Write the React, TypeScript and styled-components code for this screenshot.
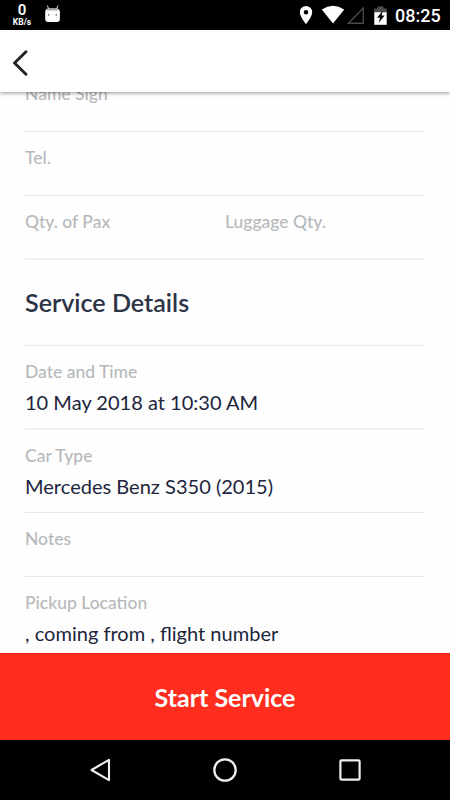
import React from "react";
import styled, { createGlobalStyle } from "styled-components";

const GlobalStyle = createGlobalStyle`
  * { box-sizing: border-box; }
  body { margin: 0; background: #fff; overflow: hidden; }
`;

const Screen = styled.div`
  width: 450px;
  height: 800px;
  display: flex;
  flex-direction: column;
  background: #fefefe;
  font-family: Lato, sans-serif;
  overflow: hidden;
`;

const StatusBar = styled.div`
  flex: none;
  height: 30px;
  display: flex;
  align-items: flex-start;
  background: #000;
  color: #fff;
  font-family: Roboto, sans-serif;
`;

const NetSpeed = styled.div`
  width: 20px;
  margin: 3px 0 0 12px;
  display: flex;
  flex-direction: column;
  align-items: center;
  white-space: nowrap;
`;

const SpeedValue = styled.span`
  font-size: 15px;
  font-weight: 600;
  line-height: 15px;
`;

const SpeedUnit = styled.span`
  font-size: 8.5px;
  font-weight: 700;
  line-height: 9px;
`;

const StatusIcons = styled.svg`
  display: block;
  flex: none;
`;

const Spacer = styled.div`
  flex: 1;
`;

const Clock = styled.div`
  width: 55px;
  font-size: 18px;
  font-weight: 500;
  line-height: 31px;
`;

const Header = styled.header`
  flex: none;
  position: relative;
  z-index: 1;
  height: 62px;
  display: flex;
  align-items: center;
  padding: 4px 0 0 12px;
  background: #fff;
  box-shadow: 0 1px 4px rgba(0, 0, 0, 0.42);
`;

const BackButton = styled.button`
  display: flex;
  padding: 0;
  border: 0;
  background: none;
`;

const Details = styled.main`
  flex: 1;
  min-height: 0;
  padding: 0 25px;
  overflow: hidden;
`;

const List = styled.div`
  margin-top: -24px;
`;

const Row = styled.div<{ $height: number; $line?: string; $thick?: boolean }>`
  height: ${(p) => p.$height}px;
  display: flex;
  padding-top: 15px;
  border-bottom: ${(p) => (p.$thick ? 2 : 1)}px solid ${(p) => p.$line ?? "#e6e9ea"};
`;

const Field = styled.div`
  flex: 1;
`;

const Label = styled.div`
  font-size: 17.5px;
  font-weight: 500;
  line-height: 22px;
  color: #b6b9bb;
`;

const Value = styled.div`
  margin-top: 6px;
  font-size: 20.05px;
  line-height: 26px;
  color: #20253c;
  white-space: nowrap;
`;

const Heading = styled.h2`
  height: 86px;
  margin: 0;
  border-bottom: 1px solid #e6e9ee;
  font-size: 25.1px;
  font-weight: 600;
  line-height: 84px;
  color: #2b3345;
`;

const StartButton = styled.button`
  flex: none;
  height: 87px;
  padding: 0 0 1px;
  border: 0;
  border-top: 1px solid #f01c12;
  background: #ff2d1e;
  color: #fff;
  font: 700 25px Lato, sans-serif;
`;

const NavBar = styled.nav`
  flex: none;
  height: 60px;
  display: flex;
  align-items: center;
  justify-content: center;
  gap: 95px;
  background: #000;
`;

interface RowData {
  height: number;
  line?: string;
  thick?: boolean;
  fields: { label: string; value?: string }[];
}

const contactRows: RowData[] = [
  { height: 64, fields: [{ label: "Name Sign" }] },
  { height: 64, fields: [{ label: "Tel." }] },
  { height: 64, line: "#f0f1f3", thick: true, fields: [{ label: "Qty. of Pax" }, { label: "Luggage Qty." }] },
];

const serviceRows: RowData[] = [
  { height: 84, line: "#edf1f4", thick: true, fields: [{ label: "Date and Time", value: "10 May 2018 at 10:30 AM" }] },
  { height: 83, line: "#e1eaf0", fields: [{ label: "Car Type", value: "Mercedes Benz S350 (2015)" }] },
  { height: 64, line: "#e1eaf0", fields: [{ label: "Notes" }] },
  { height: 84, fields: [{ label: "Pickup Location", value: ", coming from , flight number" }] },
];

const Rows = ({ rows }: { rows: RowData[] }) => (
  <>
    {rows.map((row) => (
      <Row key={row.fields[0].label} $height={row.height} $line={row.line} $thick={row.thick}>
        {row.fields.map((field) => (
          <Field key={field.label}>
            <Label>{field.label}</Label>
            {field.value && <Value>{field.value}</Value>}
          </Field>
        ))}
      </Row>
    ))}
  </>
);

export default function App() {
  return (
    <Screen>
      <GlobalStyle />
      <StatusBar>
        <NetSpeed>
          <SpeedValue>0</SpeedValue>
          <SpeedUnit>KB/s</SpeedUnit>
        </NetSpeed>
        <StatusIcons width="38" height="30" viewBox="32 0 38 30">
          <path d="M47.3 5.5l1.7 4M58 5.5l-1.7 4" stroke="#ddd" strokeWidth="1" />
          <path d="M45.2 11.5Q45.4 9 48 8.6h9Q59.7 9 59.9 11.5V19q0 3-3 3h-8.7q-3 0-3-3z" fill="#fff" />
          <path d="M47 9.5h11" stroke="#aaa" strokeWidth="2" />
          <path d="M48 14.8h1.4M55.6 14.8H57" stroke="#444" strokeWidth="1.3" />
        </StatusIcons>
        <Spacer />
        <StatusIcons width="95" height="30" viewBox="300 0 95 30">
          <path fillRule="evenodd" d="M306 6a6.2 6.2 0 0 0-6.2 6.2c0 4.5 6.2 11.8 6.2 11.8s6.2-7.3 6.2-11.8A6.2 6.2 0 0 0 306 6zm0 3.9a2.3 2.3 0 1 1 0 4.6 2.3 2.3 0 0 1 0-4.6z" fill="#fff" />
          <path d="M321.8 9.5Q333 2.2 344.2 9.5L333 23.5z" fill="#fff" />
          <path d="M348.5 23.3h14.8V8z" fill="none" stroke="#484848" strokeWidth="1.4" />
          <path d="M374.3 12.5V8.5h3.2v-2h6v2h3.2v4z" fill="#4c4c4c" />
          <path d="M374.3 12.2h12.4v12.6h-12.4z" fill="#fff" />
          <path d="M383 10.5l-6 7.3h3.1l-1.5 5.2 6-7.4h-3.1z" fill="#000" />
        </StatusIcons>
        <Clock>08:25</Clock>
      </StatusBar>
      <Header>
        <BackButton aria-label="Back">
          <svg width="17" height="28" viewBox="0 0 17 28">
            <path d="M14 2.8L2.5 14 14 25.2" fill="none" stroke="#242424" strokeWidth="3" strokeLinecap="round" strokeLinejoin="round" />
          </svg>
        </BackButton>
      </Header>
      <Details>
        <List>
          <Rows rows={contactRows} />
          <Heading>Service Details</Heading>
          <Rows rows={serviceRows} />
        </List>
      </Details>
      <StartButton>Start Service</StartButton>
      <NavBar>
        <svg width="30" height="30" viewBox="0 0 30 30">
          <path d="M24 4.8v20.4L6.5 15z" fill="none" stroke="#eee" strokeWidth="2.1" strokeLinejoin="round" />
        </svg>
        <svg width="30" height="30" viewBox="0 0 30 30">
          <circle cx="15" cy="15" r="10.7" fill="none" stroke="#eee" strokeWidth="2.3" />
        </svg>
        <svg width="30" height="30" viewBox="0 0 30 30">
          <rect x="5.4" y="5.4" width="19.2" height="19.2" rx="1" fill="none" stroke="#eee" strokeWidth="2.2" />
        </svg>
      </NavBar>
    </Screen>
  );
}
